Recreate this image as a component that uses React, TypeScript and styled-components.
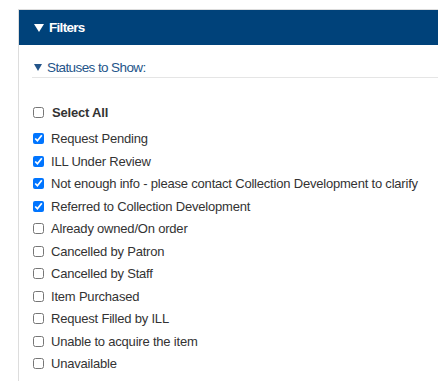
import styled, { createGlobalStyle } from 'styled-components';

const GlobalStyle = createGlobalStyle`
  body {
    margin: 0;
    background: #ffffff;
    font-family: "Liberation Sans", Arial, sans-serif;
    overflow: hidden;
  }
`;

const Panel = styled.section`
  margin: 9px 0 0 18px;
  width: 440px;
  border: 1px solid #dddddd;
  border-bottom: none;
  min-height: 380px;
  box-sizing: border-box;
`;

const PanelHeader = styled.div`
  height: 35px;
  display: flex;
  align-items: center;
  gap: 5px;
  padding-left: 15px;
  background: #00427a;
  color: #ffffff;
  font-size: 13.5px;
  font-weight: bold;
  letter-spacing: -0.7px;
`;

// filled down-pointing triangle used as the collapse marker
const Caret = styled.span<{ $w: number; $h: number; $color: string }>`
  display: inline-block;
  width: 0;
  height: 0;
  border-left: ${(p) => p.$w / 2}px solid transparent;
  border-right: ${(p) => p.$w / 2}px solid transparent;
  border-top: ${(p) => p.$h}px solid ${(p) => p.$color};
  margin-top: 1px;
`;

const PanelBody = styled.div`
  padding: 12px 0 0 13px;
`;

const SectionTitle = styled.div`
  display: flex;
  align-items: center;
  gap: 5px;
  height: 20px;
  padding-left: 2px;
  font-size: 13.5px;
  letter-spacing: -0.6px;
  color: #24558a;
  border-bottom: 1px solid #e5e5e5;
`;

const List = styled.div`
  display: flex;
  flex-direction: column;
  margin-top: 23px;
  padding-left: 1px;
`;

const Row = styled.label<{ $head?: boolean }>`
  display: flex;
  align-items: center;
  gap: ${(p) => (p.$head ? '8px' : '7px')};
  height: 22.5px;
  font-size: 13px;
  letter-spacing: -0.2px;
  color: #333333;
  font-weight: ${(p) => (p.$head ? 'bold' : 'normal')};
  margin-bottom: ${(p) => (p.$head ? '4px' : '0')};
`;

const Box = styled.input`
  margin: 0;
  width: 11px;
  height: 11px;
`;

const statuses: [string, boolean][] = [
  ['Request Pending', true],
  ['ILL Under Review', true],
  ['Not enough info - please contact Collection Development to clarify', true],
  ['Referred to Collection Development', true],
  ['Already owned/On order', false],
  ['Cancelled by Patron', false],
  ['Cancelled by Staff', false],
  ['Item Purchased', false],
  ['Request Filled by ILL', false],
  ['Unable to acquire the item', false],
  ['Unavailable', false],
];

const App = () => (
  <>
    <GlobalStyle />
    <Panel>
      <PanelHeader>
        <Caret $w={10} $h={8} $color="#ffffff" />
        Filters
      </PanelHeader>
      <PanelBody>
        <SectionTitle>
          <Caret $w={9} $h={7} $color="#24558a" />
          Statuses to Show:
        </SectionTitle>
        <List>
          <Row $head>
            <Box type="checkbox" />
            Select All
          </Row>
          {statuses.map(([name, on]) => (
            <Row key={name}>
              <Box type="checkbox" defaultChecked={on} />
              {name}
            </Row>
          ))}
        </List>
      </PanelBody>
    </Panel>
  </>
);

export default App;
